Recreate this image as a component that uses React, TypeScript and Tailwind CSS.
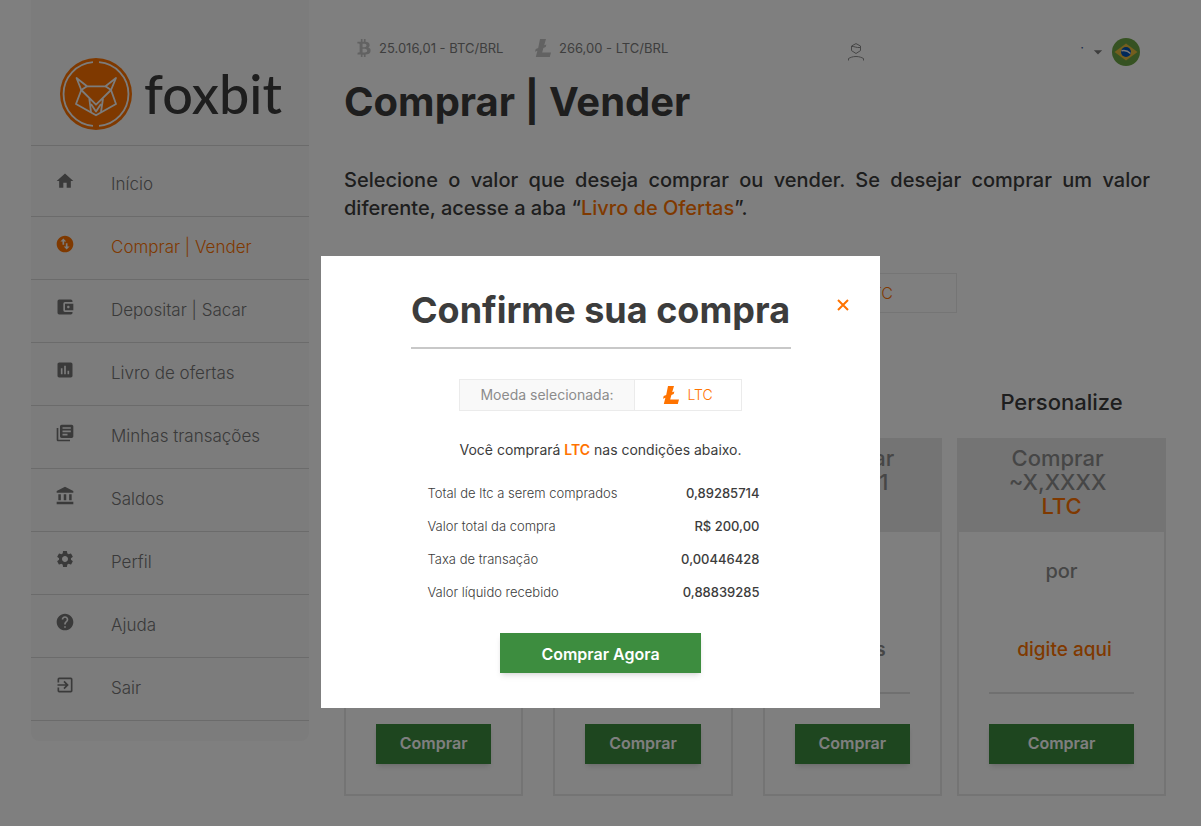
import { useState } from 'react';
import type { ComponentType } from 'react';
import {
  MdAccountBalance,
  MdAccountBalanceWallet,
  MdArrowDropDown,
  MdAssessment,
  MdExitToApp,
  MdHelp,
  MdHome,
  MdLibraryBooks,
  MdSettings,
  MdSwapVerticalCircle,
} from 'react-icons/md';
import { FaBtc } from 'react-icons/fa';

type NavItem = { label: string; icon: ComponentType<{ className?: string }>; active?: boolean };

const NAV: NavItem[] = [
  { label: 'Início', icon: MdHome },
  { label: 'Comprar | Vender', icon: MdSwapVerticalCircle, active: true },
  { label: 'Depositar | Sacar', icon: MdAccountBalanceWallet },
  { label: 'Livro de ofertas', icon: MdAssessment },
  { label: 'Minhas transações', icon: MdLibraryBooks },
  { label: 'Saldos', icon: MdAccountBalance },
  { label: 'Perfil', icon: MdSettings },
  { label: 'Ajuda', icon: MdHelp },
  { label: 'Sair', icon: MdExitToApp },
];

const OFFERS = [
  { amount: '~0,2231', price: '50 reais' },
  { amount: '~0,4461', price: '100 reais' },
  { amount: '~0,8911', price: '200 reais' },
];

const SUMMARY = [
  { label: 'Total de ltc a serem comprados', value: '0,89285714' },
  { label: 'Valor total da compra', value: 'R$ 200,00' },
  { label: 'Taxa de transação', value: '0,00446428' },
  { label: 'Valor líquido recebido', value: '0,88839285' },
];

function LitecoinIcon({ className }: { className?: string }) {
  return (
    <svg viewBox="0 0 16 18" className={className} fill="currentColor" aria-hidden="true">
      <path d="M5 0h6L9.2 6.3l2.2-.9-.7 2.6-2.3 1L7.2 13.6h8.8L14.8 18H.8l1.6-6.3-2.4 1 .7-2.7 2.5-1z" />
    </svg>
  );
}

function Logo() {
  return (
    <a href="#" aria-label="foxbit" className="flex h-[145px] items-end gap-3 pl-[29px] pb-[15px]">
      <svg viewBox="0 0 72 72" className="h-[72px] w-[72px] shrink-0" aria-hidden="true">
        <circle cx="36" cy="36" r="36" fill="#ff7300" />
        <g fill="none" stroke="#f9f9f9" strokeWidth="1.8" strokeLinejoin="round">
          <path d="M33 4.1A32 32 0 0 0 33 67.9M39 4.1A32 32 0 0 1 39 67.9" />
          <path d="M16.500 20L27 28.300h18.500L56 20l-5 12 5 14-20 11.300L16 46l5.300-14z" />
          <path d="M27 28.300L21.300 32 36 46.700 51 32l-5.500-3.700M29.300 40.500L31 54M43 40.500L41 54M31 46l5 7.500 5-7.500" />
        </g>
      </svg>
      <span className="font-[Lato] text-[54px] leading-[72px] font-medium text-[#3c3c3c]">foxbit</span>
    </a>
  );
}

function Sidebar() {
  return (
    <aside className="w-[278px] shrink-0 self-start rounded-b-lg bg-[#f9f9f9] pb-5">
      <Logo />
      <nav className="border-t border-[#d6d6d6]">
        {NAV.map(({ label, icon: Icon, active }) => (
          <a
            key={label}
            href="#"
            className={`flex h-[63px] items-center border-b border-[#d6d6d6] pl-6 text-[17px] first:h-[71px] first:pt-2 ${
              active ? 'text-[#ff7300]' : 'text-[#747474]'
            }`}
          >
            <Icon className="mb-2 h-5 w-5" />
            <span className="pl-9 font-light">{label}</span>
          </a>
        ))}
      </nav>
    </aside>
  );
}

function TopBar() {
  return (
    <header className="flex h-7 items-center pl-[13px] text-[13px] text-[#7c7c7c]">
      <div className="flex h-5 items-center self-start">
        <FaBtc className="h-[18px] w-[14px] text-[#c4c4c4]" />
        <span className="w-[164px] pt-px pl-2">25.016,01 - BTC/BRL</span>
        <LitecoinIcon className="h-[18px] w-4 text-[#c4c4c4]" />
        <span className="pt-px pl-2">266,00 - LTC/BRL</span>
      </div>
      <button type="button" aria-label="Conta" className="ml-[180px]">
        <svg viewBox="0 0 16 18" className="h-[18px] w-4" fill="none" stroke="#8c8c8c" aria-hidden="true">
          <path d="M8 .6l4.500 2.400v4.600L8 10.500 3.500 7.600V3zM3.500 3.500C6 3 8 5 12.500 4.500M.5 17.500v-2c2-1 4-2 7.500-2s5.500 1 7.500 2v2" />
        </svg>
      </button>
      <button type="button" aria-label="Idioma" className="ml-auto mr-[26px] flex items-center">
        <span className="pb-2 text-[#3c5c9c]">·</span>
        <MdArrowDropDown className="mx-1 h-5 w-5" />
        <svg viewBox="0 0 28 28" className="h-7 w-7" aria-hidden="true">
          <circle cx="14" cy="14" r="14" fill="#6da544" />
          <path d="M14 5.500L25.500 14 14 22.500 2.500 14z" fill="#e8bc3c" />
          <circle cx="14" cy="14" r="5" fill="#0052b4" />
          <path d="M9.500 12.800c3-.8 6.500.2 9 2.700" stroke="#f0f0f0" strokeWidth="1.400" fill="none" />
        </svg>
      </button>
    </header>
  );
}

function CurrencyBox({ large }: { large?: boolean }) {
  return (
    <div
      className={`mx-auto flex border border-[#ebebeb] ${
        large ? 'h-10 w-[404px] text-base' : 'h-8 w-[283px] text-sm'
      }`}
    >
      <span
        className={`flex items-center justify-center border-r border-[#ebebeb] bg-[#f9f9f9] text-[#8c8c8c] ${
          large ? 'w-[223px]' : 'w-[175px]'
        }`}
      >
        Moeda selecionada:
      </span>
      <span className="flex flex-1 items-center justify-center gap-2 text-[#ff7300]">
        <LitecoinIcon className="h-[18px] w-4" />
        <span className="font-light">LTC</span>
      </span>
    </div>
  );
}

function OfferCard({ amount, price, custom }: { amount: string; price: string; custom?: boolean }) {
  return (
    <div className="border-2 border-t-0 border-[#e9e9e9] text-center">
      <h3 className="-mx-0.5 flex h-[94px] flex-col bg-[#e9e9e9] pt-2 text-[22px] leading-6 font-medium text-[#8c8c8c]">
        <span className="pr-2">Comprar</span>
        <span className="pr-2">{amount}</span>
        <span className="text-[#ff7300]">LTC</span>
      </h3>
      <div className="px-[30px]">
        <p className="pt-6 text-xl leading-[30px] font-medium text-[#8c8c8c]">por</p>
        <div className="mt-9 h-[72px] border-b-2 border-[#e0e0e0] pt-3">
          {custom ? (
            <a href="#" className="pl-1.5 text-[19px] leading-8 font-medium text-[#ff7300]">
              {price}
            </a>
          ) : (
            <p className="pr-5 text-[19px] leading-8 font-semibold text-[#8c8c8c]">{price}</p>
          )}
        </div>
        <button type="button" className="my-[30px] h-10 w-full bg-[#3d8d3f] pb-0.5 font-semibold text-white shadow-md">
          Comprar
        </button>
      </div>
    </div>
  );
}

function ConfirmDialog({ onClose }: { onClose: () => void }) {
  return (
    <div className="fixed inset-0 flex items-start justify-center bg-black/50 pt-64">
      <div
        role="dialog"
        aria-modal="true"
        aria-labelledby="confirm-title"
        className="relative flex w-[559px] flex-col items-center bg-white pt-[34px] pb-[35px] text-[#3c3c3c]"
      >
        <button type="button" aria-label="Fechar" onClick={onClose} className="absolute top-[39px] right-7 text-[#ff7300]">
          <svg viewBox="0 0 20 20" className="h-5 w-5" stroke="currentColor" strokeWidth="2" aria-hidden="true">
            <path d="M6 5l10 10M16 5L6 15" />
          </svg>
        </button>
        <h2 id="confirm-title" className="w-[380px] border-b-2 border-[#c8c8c8] pb-4 text-center text-4xl leading-[41px] font-bold">
          Confirme sua compra
        </h2>
        <div className="mt-[30px]">
          <CurrencyBox />
        </div>
        <p className="mt-[29px] text-sm leading-5">
          Você comprará <strong className="font-semibold text-[#ff7300]">LTC</strong> nas condições abaixo.
        </p>
        <dl className="mt-[17px] mr-[14px] w-[332px] text-[13px]">
          {SUMMARY.map((row) => (
            <div key={row.label} className="flex h-[33px] items-center justify-between">
              <dt className="font-light">{row.label}</dt>
              <dd className="font-medium">{row.value}</dd>
            </div>
          ))}
        </dl>
        <button type="button" className="mt-6 h-10 w-[201px] bg-[#3d8d3f] pt-0.5 font-semibold text-white shadow-md">
          Comprar Agora
        </button>
      </div>
    </div>
  );
}

export default function App() {
  const [open, setOpen] = useState(true);

  return (
    <div className="min-h-screen bg-white font-['Inter','Liberation_Sans',sans-serif]">
      <div className="flex gap-[35px] px-[31px]">
        <Sidebar />
        <main className="min-w-0 flex-1 pt-[38px] pr-1 pb-[30px] text-[#3c3c3c]">
          <TopBar />
          <h1 className="mt-3 text-[40px] leading-[48px] font-bold">Comprar | Vender</h1>
          <p className="mt-10 mr-4 text-justify text-xl leading-7 font-medium">
            Selecione o valor que deseja comprar ou vender. Se desejar comprar um valor diferente, acesse a aba “
            <a href="#" className="text-[#ff7300]">
              Livro de Ofertas
            </a>
            ”.
          </p>
          <div className="mt-[51px]">
            <CurrencyBox large />
          </div>
          <div className="mt-[73px] flex gap-[15px]">
            <section className="flex-[598]">
              <h2 className="h-[52px] text-center text-[22px] leading-8 font-medium">Valores</h2>
              <div className="grid grid-cols-3 gap-[30px]">
                {OFFERS.map((offer) => (
                  <OfferCard key={offer.amount} {...offer} />
                ))}
              </div>
            </section>
            <section className="flex-[209]">
              <h2 className="h-[52px] text-center text-[22px] leading-8 font-medium">Personalize</h2>
              <OfferCard amount="~X,XXXX" price="digite aqui" custom />
            </section>
          </div>
        </main>
      </div>
      {open && <ConfirmDialog onClose={() => setOpen(false)} />}
    </div>
  );
}
